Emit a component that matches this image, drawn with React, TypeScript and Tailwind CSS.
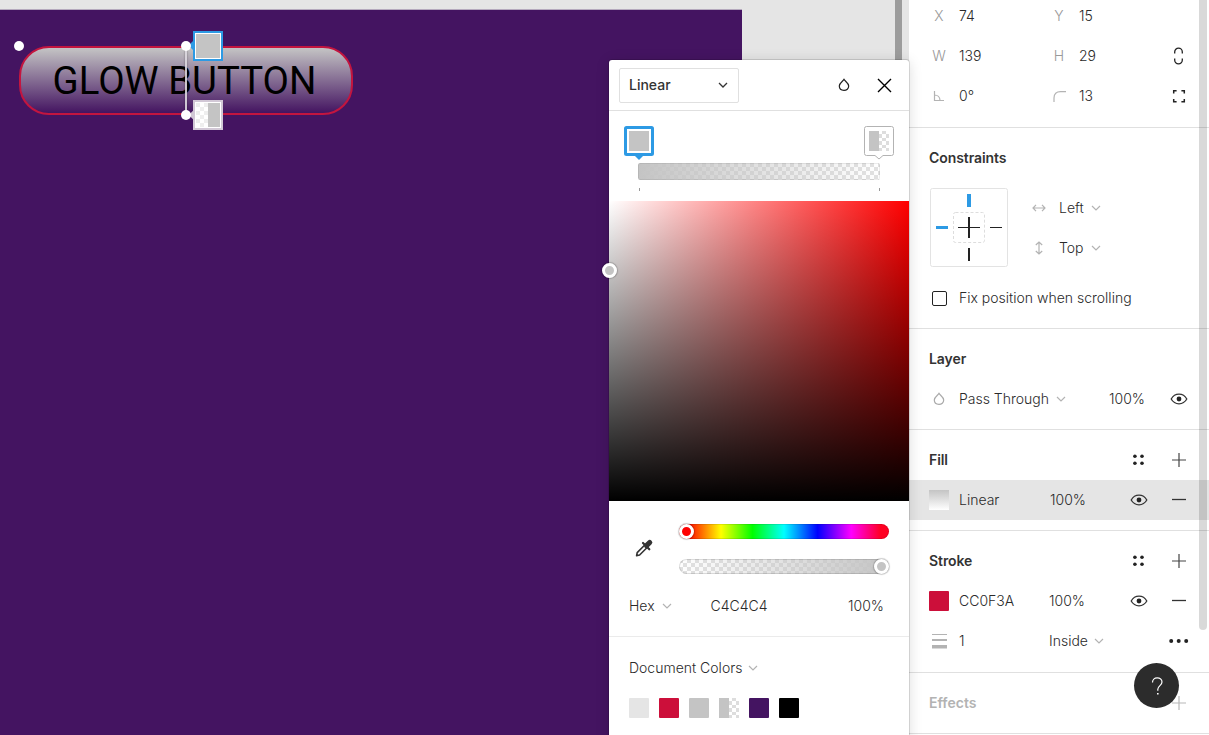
import React from "react";

const CHECKER =
  "bg-[conic-gradient(#fff_25%,#e1e1e1_0_50%,#fff_0_75%,#e1e1e1_0)] bg-[length:8px_8px]";

function Chevron({ dark = false }: { dark?: boolean }) {
  return (
    <svg width="10" height="8" viewBox="0 0 10 8" fill="none" stroke={dark ? "#333" : "#b3b3b3"} strokeWidth={dark ? 1.3 : 1.2}>
      <path d="M1 2L5 6L9 2" />
    </svg>
  );
}

function Eye() {
  return (
    <svg width="18" height="12" viewBox="0 0 18 12" fill="none">
      <path d="M1.2 6C3 2.8 5.8 1.2 9 1.2S15 2.8 16.8 6C15 9.2 12.2 10.8 9 10.8S3 9.2 1.2 6Z" stroke="#333" strokeWidth="1.3" />
      <circle cx="9" cy="6" r="2.4" fill="#222" />
    </svg>
  );
}

function Drop({ color }: { color: string }) {
  return (
    <svg width="12" height="14" viewBox="0 0 12 14" fill="none">
      <path d="M6 1.4C5 3.1 1.3 5 1.3 8.1C1.3 10.8 3.4 12.4 6 12.4S10.7 10.8 10.7 8.1C10.7 5 7 3.1 6 1.4Z" stroke={color} strokeWidth="1.2" />
    </svg>
  );
}

function Plus({ faded = false }: { faded?: boolean }) {
  return (
    <svg width="14" height="14" viewBox="0 0 14 14" stroke={faded ? "#b8b8b8" : "#444"} strokeWidth="1.2">
      <path d="M7 0V14M0 7H14" />
    </svg>
  );
}

function Minus() {
  return (
    <svg width="14" height="14" viewBox="0 0 14 14" stroke="#333" strokeWidth="1.3">
      <path d="M0 6.5H14" />
    </svg>
  );
}

function Dots() {
  return (
    <svg width="12" height="12" viewBox="0 0 12 12" fill="#222">
      <circle cx="1.9" cy="2.2" r="1.8" />
      <circle cx="9" cy="2.2" r="1.8" />
      <circle cx="1.9" cy="9.3" r="1.8" />
      <circle cx="9" cy="9.3" r="1.8" />
    </svg>
  );
}

function Slot({ children }: { children?: React.ReactNode }) {
  return <div className="flex w-5 shrink-0 items-center justify-center">{children}</div>;
}

function Section({ children, className = "" }: { children: React.ReactNode; className?: string }) {
  return <section className={`border-b border-[#e0e0e0] pt-2.5 ${className}`}>{children}</section>;
}

function Title({ children, actions = false }: { children: React.ReactNode; actions?: boolean }) {
  return (
    <div className="flex h-10 items-center pr-5 pl-5">
      <h2 className="flex-1 text-[14px] font-semibold tracking-[-0.08px] text-[#333]">{children}</h2>
      {actions && (
        <div className="flex gap-5">
          <Slot><Dots /></Slot>
          <Slot><Plus /></Slot>
        </div>
      )}
    </div>
  );
}

function Field({ label, value }: { label: React.ReactNode; value: string }) {
  return (
    <div className="flex w-[120px] items-center gap-2.5">
      <Slot><span className="flex text-[#999]">{label}</span></Slot>
      <span>{value}</span>
    </div>
  );
}

function FieldRow({ a, b, end }: { a: React.ReactNode; b: React.ReactNode; end?: React.ReactNode }) {
  return (
    <div className="flex h-10 items-center px-5">
      {a}
      {b}
      <Slot>{end}</Slot>
    </div>
  );
}

function Sidebar() {
  return (
    <aside className="relative h-[735px] w-[300px] shrink-0 overflow-hidden bg-white">
      <div className="-mt-[14px]">
        <Section className="h-[142px]">
          <FieldRow a={<Field label="X" value="74" />} b={<Field label="Y" value="15" />} />
          <FieldRow
            a={<Field label="W" value="139" />}
            b={<Field label="H" value="29" />}
            end={
              <svg width="10" height="18" viewBox="0 0 10 18" fill="none" stroke="#222" strokeWidth="1.3">
                <path d="M0.7 6.5V4.9A3.8 3.8 0 0 1 8.3 4.9V6.5M0.7 11.5V13.1A3.8 3.8 0 0 0 8.3 13.1V11.5" />
              </svg>
            }
          />
          <FieldRow
            a={
              <Field
                label={
                  <svg width="12" height="12" viewBox="0 0 12 12" fill="none" stroke="#b3b3b3" strokeWidth="1.2">
                    <path d="M1.5 1V10.5H11M1.5 5C4.5 5 7 7 7 10.5" />
                  </svg>
                }
                value="0°"
              />
            }
            b={
              <Field
                label={
                  <svg width="13" height="12" viewBox="0 0 13 12" fill="none" stroke="#b3b3b3" strokeWidth="1.2">
                    <path d="M1 12V8C1 4 3.5 1.6 7.5 1.6H13" />
                  </svg>
                }
                value="13"
              />
            }
            end={
              <svg width="14" height="14" viewBox="0 0 14 14" fill="none" stroke="#222" strokeWidth="1.5">
                <path d="M1.7 4.6V1.7H4.6M9.4 1.7H12.3V4.6M12.3 9.9V12.8H9.4M4.6 12.8H1.7V9.9" />
              </svg>
            }
          />
        </Section>

        <Section className="h-[201px]">
          <Title>Constraints</Title>
          <div className="flex h-[90px] pt-2.5 pl-5">
            <svg className="ml-px" width="80" height="81" viewBox="0 0 80 81" fill="none">
              <rect x="0.5" y="0.5" width="77" height="78" rx="2" stroke="#e3e3e3" />
              <rect x="23.5" y="24.5" width="31" height="30" rx="2" stroke="#ddd" strokeDasharray="3 2" />
              <path d="M28 39.5H50M60 39.5H72" stroke="#222" />
              <path d="M39 29V50M39 60V73" stroke="#222" strokeWidth="2" />
              <path d="M39 6V19" stroke="#2d9ae4" strokeWidth="4" />
              <path d="M6 39.5H18" stroke="#2d9ae4" strokeWidth="3" />
            </svg>
            <div className="ml-[19px] flex flex-col">
              <div className="flex h-10 items-center">
                <Slot>
                  <svg width="14" height="10" viewBox="0 0 14 10" fill="none" stroke="#b3b3b3" strokeWidth="1.2">
                    <path d="M1 5H13M4 1.8L1 5L4 8.2M10 1.8L13 5L10 8.2" />
                  </svg>
                </Slot>
                <span className="mr-[7px] ml-2.5">Left</span>
                <Chevron />
              </div>
              <div className="flex h-10 items-center">
                <Slot>
                  <svg width="10" height="14" viewBox="0 0 10 14" fill="none" stroke="#b3b3b3" strokeWidth="1.2">
                    <path d="M5 1V13M1.8 4L5 1L8.2 4M1.8 10L5 13L8.2 10" />
                  </svg>
                </Slot>
                <span className="mr-[7px] ml-2.5">Top</span>
                <Chevron />
              </div>
            </div>
          </div>
          <div className="mt-2.5 flex h-10 items-center gap-2.5 pl-5">
            <Slot><span className="ml-px size-[15px] rounded-[2px] border border-[#222]" /></Slot>
            <span>Fix position when scrolling</span>
          </div>
        </Section>

        <Section className="h-[101px]">
          <Title>Layer</Title>
          <div className="flex h-10 items-center px-5">
            <Slot><Drop color="#aaa" /></Slot>
            <span className="mr-[7px] ml-2.5">Pass Through</span>
            <Chevron />
            <span className="mr-[24px] ml-auto">100%</span>
            <Slot><Eye /></Slot>
          </div>
        </Section>

        <Section className="h-[101px]">
          <Title actions>Fill</Title>
          <div className="flex h-10 items-center bg-[#e5e5e5] px-5">
            <span className="size-5 bg-linear-to-b from-[#c4c4c4] to-white" />
            <span className="ml-2.5 w-[91px]">Linear</span>
            <span className="flex-1">100%</span>
            <div className="flex gap-5">
              <Slot><Eye /></Slot>
              <Slot><Minus /></Slot>
            </div>
          </div>
        </Section>

        <Section className="h-[142px]">
          <Title actions>Stroke</Title>
          <div className="flex h-10 items-center px-5">
            <span className="size-5 rounded-[1px] bg-[#cc0f3a]" />
            <span className="ml-2.5 w-[90px]">CC0F3A</span>
            <span className="flex-1">100%</span>
            <div className="flex gap-5">
              <Slot><Eye /></Slot>
              <Slot><Minus /></Slot>
            </div>
          </div>
          <div className="flex h-10 items-center px-5">
            <Slot>
              <svg width="15" height="16" viewBox="0 0 15 16" fill="#b3b3b3">
                <path d="M0 1H15V2H0ZM0 6H15V8H0ZM0 12H15V15.5H0Z" />
              </svg>
            </Slot>
            <span className="ml-2.5 w-[90px]">1</span>
            <span className="mr-[6px]">Inside</span>
            <Chevron />
            <svg className="ml-auto" width="20" height="6" viewBox="0 0 20 6" fill="#222">
              <circle cx="2.2" cy="3" r="2" />
              <circle cx="9.7" cy="3" r="2" />
              <circle cx="17.2" cy="3" r="2" />
            </svg>
          </div>
        </Section>

        <Section className="h-[61px]">
          <div className="flex h-10 items-center px-5">
            <h2 className="flex-1 text-[14px] font-semibold text-[#b3b3b3]">Effects</h2>
            <Slot><Plus faded /></Slot>
          </div>
        </Section>
      </div>
      <div className="absolute top-0 right-[2px] h-[630px] w-2 rounded-b-full bg-black/15" />
      <button className="absolute top-[663px] left-[225px] flex size-[45px] items-center justify-center rounded-full bg-[#2c2c2c]">
        <svg width="14" height="20" viewBox="0 0 14 20" fill="none" stroke="#fff" strokeWidth="1.2">
          <path d="M2.5 6.5C2.5 3.5 4.5 1.9 7.2 1.9S12 3.6 12 6.1C12 9.5 7.8 9.7 7.8 13.3V14.8" />
          <path d="M7.8 16.9V18.5" strokeWidth="1.6" />
        </svg>
      </button>
    </aside>
  );
}

function Canvas() {
  return (
    <main className="relative h-[735px] w-[909px] shrink-0 overflow-hidden bg-[#e5e5e5]">
      <div className="absolute top-[9px] left-0 h-[726px] w-[742px] border-t border-[#b5a9bd] bg-[#441461]" />
      <div className="absolute top-[46px] left-[19px] flex h-[69px] w-[334px] items-center justify-center rounded-[30px] border-2 border-[#c3153f] bg-linear-to-b from-[#c4c4c4] to-transparent">
        <span className="mt-[2px] mr-[3px] font-[Roboto] text-[38.4px] leading-none font-normal whitespace-nowrap text-black">GLOW BUTTON</span>
      </div>
      <div className="absolute top-[46px] left-[185px] h-[69px] w-[2px] bg-[#dcd7df]/90 shadow-[0_0_2px_rgba(0,0,0,0.4)]" />
      <div className="absolute top-[41px] left-[14px] size-[10px] rounded-full bg-white" />
      <div className="absolute top-[42px] left-[190px] size-[7px] rotate-45 bg-[#2d9ae4]" />
      <div className="absolute top-[112px] left-[190px] size-[6px] rotate-45 bg-[#d2c8d6]" />
      <div className="absolute top-[41px] left-[181px] size-[10px] rounded-full bg-white" />
      <div className="absolute top-[110px] left-[181px] size-[10px] rounded-full bg-white" />
      <div className="absolute top-[31px] left-[193px] size-[30px] border-2 border-[#2d9ae4] bg-white p-px">
        <div className="size-full bg-[#c4c4c4]" />
      </div>
      <div className="absolute top-[100px] left-[193px] flex size-[30px] border-2 border-[#d2c8d6] bg-white p-px">
        <div className="w-1/2 bg-[conic-gradient(#fff_25%,#eee_0_50%,#fff_0_75%,#eee_0)] bg-[length:8px_8px]" />
        <div className="w-1/2 bg-[#c4c4c4]" />
      </div>
      <div className="absolute top-0 right-[7px] h-[735px] w-[7px] bg-[#9c9c9c]" />
    </main>
  );
}

function Picker() {
  return (
    <div className="absolute top-[60px] left-[609px] flex h-[690px] w-[300px] flex-col rounded-t-[3px] bg-white shadow-[0_0_0_1px_rgba(0,0,0,0.12),0_2px_14px_rgba(0,0,0,0.15)]">
      <header className="flex h-[51px] items-center border-b border-[#e0e0e0] pr-[17px] pl-2.5">
        <div className="flex h-[35px] w-[120px] items-center justify-between rounded-[2px] border border-[#e0e0e0] pr-2.5 pl-[9px]">
          <span className="font-medium text-[#333]">Linear</span>
          <Chevron dark />
        </div>
        <div className="mr-[27px] ml-auto"><Drop color="#222" /></div>
        <svg width="15" height="15" viewBox="0 0 15 15" stroke="#000" strokeWidth="1.4">
          <path d="M1 1L14 14M14 1L1 14" />
        </svg>
      </header>
      <div className="h-[90px] px-[15px] pt-[15px]">
        <div className="flex justify-between">
          <svg width="30" height="34" viewBox="0 0 30 34">
            <path d="M10 29H20L15 34Z" fill="#2d9ae4" />
            <rect x="1.5" y="1.5" width="27" height="27" rx="1" fill="#fff" stroke="#2d9ae4" strokeWidth="3" />
            <rect x="5" y="5" width="20" height="20" fill="#c4c4c4" />
          </svg>
          <svg width="30" height="34" viewBox="0 0 30 34">
            <path d="M2.5 0.5H27.5Q29.5 0.5 29.5 2.5V27.5Q29.5 29.5 27.5 29.5H19L15 33L11 29.5H2.5Q0.5 29.5 0.5 27.5V2.5Q0.5 0.5 2.5 0.5Z" fill="#fff" stroke="#b3b3b3" />
            <rect x="5" y="5" width="10" height="20" fill="#c4c4c4" />
            <path d="M18 5h4v3h-4zM15 8h3v4h-3zM22 8h3v4h-3zM18 12h4v3h-4zM15 15h3v4h-3zM22 15h3v4h-3zM18 19h4v3h-4zM15 22h3v3h-3zM22 22h3v3h-3z" fill="#ddd" />
          </svg>
        </div>
        <div className={`mx-[14px] mt-[3px] h-[17px] overflow-hidden rounded-[2px] ${CHECKER}`}>
          <div className="size-full rounded-[2px] bg-linear-to-r from-[#c4c4c4] to-transparent shadow-[inset_0_0_0_1px_rgba(0,0,0,0.07)]" />
        </div>
        <div className="mr-[14px] ml-[15px] mt-[8px] flex h-[3px] justify-between">
          <span className="w-px bg-[#999]" />
          <span className="w-px bg-[#999]" />
        </div>
      </div>
      <div className="relative h-[300px] bg-[linear-gradient(to_top,#000,transparent),linear-gradient(to_right,#fff,#f00)]">
        <div className="absolute top-[62px] -left-[7px] size-[15px] rounded-full border-3 border-white bg-[#c4c4c4] shadow-[0_0_1px_1px_rgba(0,0,0,0.2)]" />
      </div>
      <div className="flex h-[85px] pt-[23px] pl-[25px]">
        <svg className="mt-[14px]" width="20" height="20" viewBox="0 0 20 20" fill="none">
          <path d="M11 6.8L3.2 14.6L2.6 17.6L5.6 17L13.4 9.2" stroke="#333" strokeWidth="1.6" strokeLinejoin="round" />
          <path d="M9 5L15.3 11.3" stroke="#333" strokeWidth="2.2" strokeLinecap="round" />
          <path d="M12.5 7.7L15.7 4.5" stroke="#333" strokeWidth="5.2" strokeLinecap="round" />
        </svg>
        <div className="ml-[25px] flex w-[210px] flex-col gap-5">
          <div className="flex h-[15px] items-center rounded-full bg-[linear-gradient(to_right,#f00_4%,#ff0_20%,#0f0_35%,#0ff_50%,#00f_66%,#f0f_82%,#f02_96%)] shadow-[inset_0_0_0_1px_rgba(0,0,0,0.1)]">
            <span className="size-[15px] rounded-full border-3 border-white bg-[#f00] shadow-[0_0_1px_1px_rgba(0,0,0,0.2)]" />
          </div>
          <div className={`h-[15px] rounded-full ${CHECKER}`}>
            <div className="flex size-full items-center justify-end rounded-full bg-linear-to-r from-transparent to-[#c4c4c4] shadow-[inset_0_0_0_1px_rgba(0,0,0,0.12)]">
              <span className="size-[15px] rounded-full border-3 border-white bg-[#c4c4c4] shadow-[0_0_1px_1px_rgba(0,0,0,0.2)]" />
            </div>
          </div>
        </div>
      </div>
      <div className="flex h-[51px] items-center border-b border-[#ebebeb] pr-[25px] pb-[11px] pl-5">
        <span className="mr-[7px]">Hex</span>
        <Chevron />
        <span className="ml-[39px]">C4C4C4</span>
        <span className="ml-auto">100%</span>
      </div>
      <div className="px-5 pt-[11px]">
        <div className="flex h-10 items-center gap-[6px]">
          <span>Document Colors</span>
          <Chevron />
        </div>
        <div className="mt-2.5 flex gap-2.5">
          <span className="size-5 rounded-[1px] bg-[#e5e5e5]" />
          <span className="size-5 rounded-[1px] bg-[#cc0f3a]" />
          <span className="size-5 rounded-[1px] bg-[#c4c4c4]" />
          <svg width="20" height="20" viewBox="0 0 20 20">
            <rect width="10" height="20" fill="#c4c4c4" />
            <path d="M13 0h4v3h-4zM10 3h3v4h-3zM17 3h3v4h-3zM13 7h4v3h-4zM10 10h3v4h-3zM17 10h3v4h-3zM13 14h4v3h-4zM10 17h3v3h-3zM17 17h3v3h-3z" fill="#ddd" />
          </svg>
          <span className="size-5 rounded-[1px] bg-[#441461]" />
          <span className="size-5 rounded-[1px] bg-black" />
        </div>
      </div>
    </div>
  );
}

export default function App() {
  return (
    <div className="relative flex h-[735px] w-[1209px] overflow-hidden font-[Inter,sans-serif] text-[14px] leading-5 font-light whitespace-nowrap text-[#2a2a2a]">
      <Canvas />
      <Sidebar />
      <Picker />
    </div>
  );
}
